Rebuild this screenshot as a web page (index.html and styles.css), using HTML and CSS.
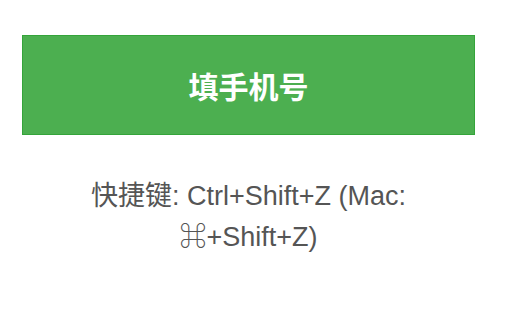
FILE: index.html
```html
<!DOCTYPE html>
<html lang="zh-CN">
<head>
<meta charset="utf-8">
<link rel="stylesheet" href="styles.css">
</head>
<body>
<div class="panel">
  <button class="fill-btn">填手机号</button>
  <p class="hint">快捷键: Ctrl+Shift+Z (Mac: ⌘+Shift+Z)</p>
</div>
</body>
</html>
```
FILE: styles.css
```css
html, body {
  margin: 0;
  padding: 0;
  background: #ffffff;
}
.panel {
  width: 453px;
  margin-left: 22px;
  padding-top: 35px;
  display: flex;
  flex-direction: column;
  font-family: "Liberation Sans", "Noto Sans CJK SC", "DejaVu Sans", sans-serif;
}
.fill-btn {
  width: 453px;
  height: 100px;
  margin: 0;
  padding: 0;
  background: #4caf50;
  border: 1px solid #34a43a;
  color: #ffffff;
  font-family: "Noto Sans CJK SC", sans-serif;
  font-weight: bold;
  font-size: 30px;
  line-height: 1;
}
.hint {
  margin: 41px 50px 0;
  text-align: center;
  color: #555555;
  font-size: 27px;
  line-height: 41px;
}
```
